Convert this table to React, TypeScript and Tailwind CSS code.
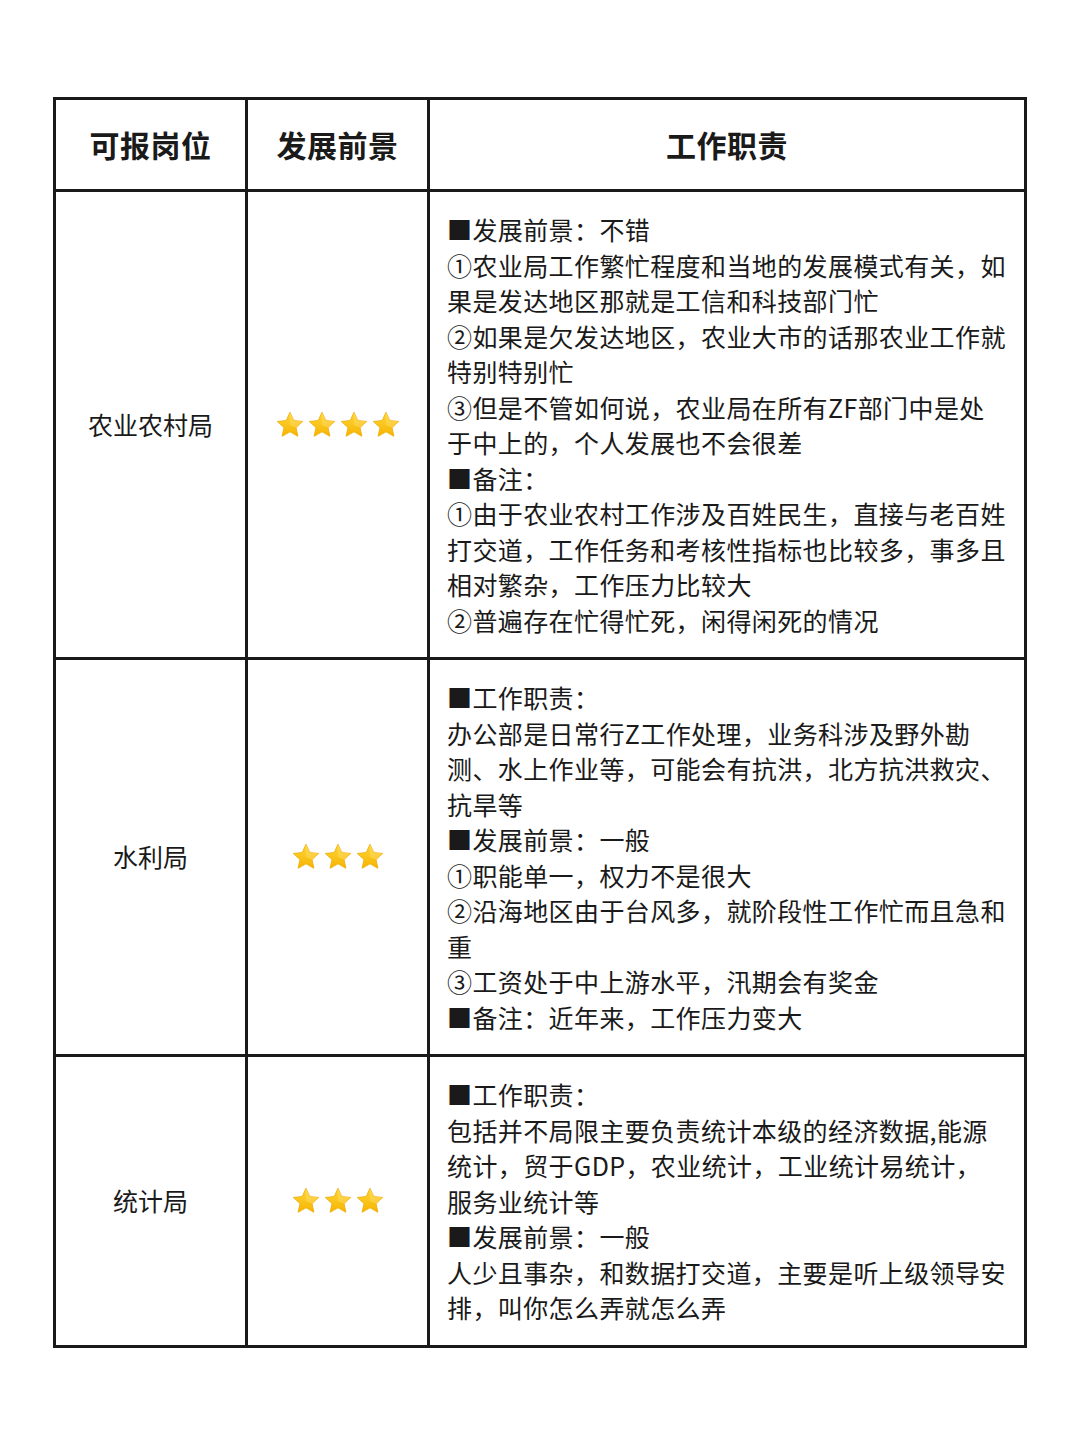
import React from 'react';

const Star = () => (
  <svg viewBox="0 0 24 24" className="w-[30px] h-[30px]">
    <defs>
      <linearGradient id="starFill" x1="0" y1="0" x2="0" y2="1">
        <stop offset="0%" stopColor="#ffd83a" />
        <stop offset="100%" stopColor="#f5b400" />
      </linearGradient>
    </defs>
    <path
      d="M12 1.8l3.05 6.6 7.15.75-5.35 4.85 1.5 7.05L12 17.45 5.65 21.05l1.5-7.05L1.8 9.15l7.15-.75z"
      fill="url(#starFill)"
      stroke="#f0a800"
      strokeWidth="0.6"
      strokeLinejoin="round"
    />
    <path d="M12 1.8l3.05 6.6 7.15.75-5.35 4.85L12 12z" fill="#ffe680" opacity="0.35" />
  </svg>
);

const Stars = ({ n }: { n: number }) => (
  <div className="flex justify-center gap-[2px]">
    {Array.from({ length: n }).map((_, i) => (
      <Star key={i} />
    ))}
  </div>
);

const rows = [
  {
    name: '农业农村局',
    stars: 4,
    lines: [
      '■发展前景：不错',
      '①农业局工作繁忙程度和当地的发展模式有关，如',
      '果是发达地区那就是工信和科技部门忙',
      '②如果是欠发达地区，农业大市的话那农业工作就',
      '特别特别忙',
      '③但是不管如何说，农业局在所有ZF部门中是处',
      '于中上的，个人发展也不会很差',
      '■备注：',
      '①由于农业农村工作涉及百姓民生，直接与老百姓',
      '打交道，工作任务和考核性指标也比较多，事多且',
      '相对繁杂，工作压力比较大',
      '②普遍存在忙得忙死，闲得闲死的情况',
    ],
  },
  {
    name: '水利局',
    stars: 3,
    lines: [
      '■工作职责：',
      '办公部是日常行Z工作处理，业务科涉及野外勘',
      '测、水上作业等，可能会有抗洪，北方抗洪救灾、',
      '抗旱等',
      '■发展前景：一般',
      '①职能单一，权力不是很大',
      '②沿海地区由于台风多，就阶段性工作忙而且急和',
      '重',
      '③工资处于中上游水平，汛期会有奖金',
      '■备注：近年来，工作压力变大',
    ],
  },
  {
    name: '统计局',
    stars: 3,
    lines: [
      '■工作职责：',
      '包括并不局限主要负责统计本级的经济数据,能源',
      '统计，贸于GDP，农业统计，工业统计易统计，',
      '服务业统计等',
      '■发展前景：一般',
      '人少且事杂，和数据打交道，主要是听上级领导安',
      '排，叫你怎么弄就怎么弄',
    ],
  },
];

export default function App() {
  return (
    <div
      className="w-[1080px] h-[1443px] bg-white text-[#1a1a1a] pt-[97px] pl-[53px]"
      style={{ fontFamily: '"Noto Sans CJK SC", "Noto Sans", sans-serif' }}
    >
      <table className="w-[974px] table-fixed border-collapse border-[3px] border-[#1a1a1a]">
        <colgroup>
          <col className="w-[192px]" />
          <col className="w-[182px]" />
          <col />
        </colgroup>
        <thead>
          <tr className="h-[92px]">
            <th className="border-[3px] border-[#1a1a1a] text-[30px] font-bold tracking-[0.5px]">可报岗位</th>
            <th className="border-[3px] border-[#1a1a1a] text-[30px] font-bold tracking-[0.5px]">发展前景</th>
            <th className="border-[3px] border-[#1a1a1a] text-[30px] font-bold tracking-[0.5px]">工作职责</th>
          </tr>
        </thead>
        <tbody>
          {rows.map((r) => (
            <tr key={r.name}>
              <td className="border-[3px] border-[#1a1a1a] text-center text-[25px]">{r.name}</td>
              <td className="border-[3px] border-[#1a1a1a]">
                <Stars n={r.stars} />
              </td>
              <td className="border-[3px] border-[#1a1a1a] pl-[17px] pt-[20px] pb-[19px] text-[25px] leading-[35.5px] tracking-[0.4px]">
                {r.lines.map((l, i) => (
                  <div key={i} className="whitespace-nowrap">
                    {l}
                  </div>
                ))}
              </td>
            </tr>
          ))}
        </tbody>
      </table>
    </div>
  );
}
